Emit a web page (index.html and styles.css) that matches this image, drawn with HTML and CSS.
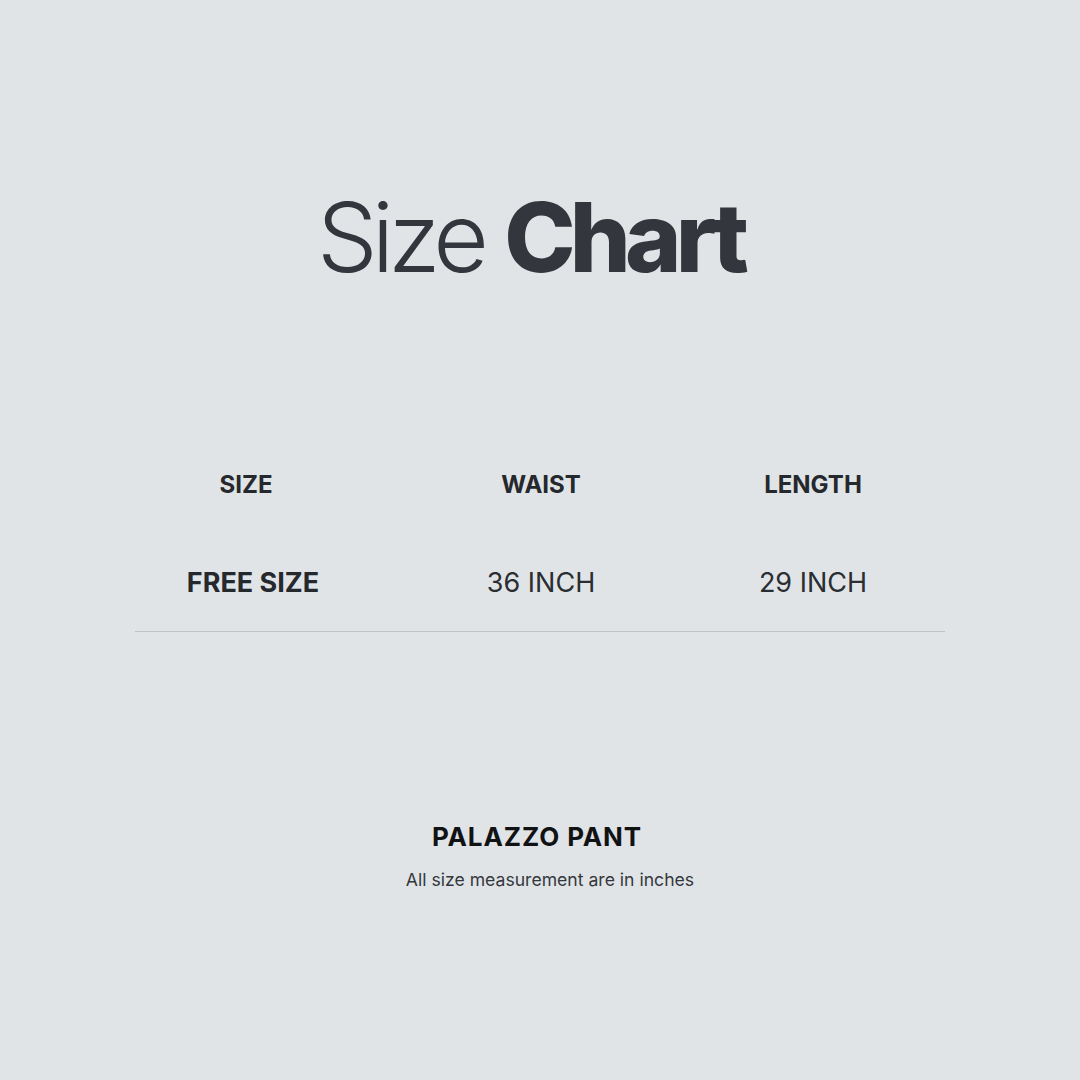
FILE: index.html
```html
<!DOCTYPE html>
<html>
<head>
<meta charset="utf-8">
<link rel="stylesheet" href="styles.css">
</head>
<body>
<main class="page">
  <h1 class="title"><span class="light">Size</span> <span class="heavy">Chart</span></h1>
  <section class="table">
    <div class="row head">
      <div class="cell c1">SIZE</div>
      <div class="cell c2">WAIST</div>
      <div class="cell c3">LENGTH</div>
    </div>
    <div class="row body-row">
      <div class="cell c1 strong">FREE SIZE</div>
      <div class="cell c2">36 INCH</div>
      <div class="cell c3">29 INCH</div>
    </div>
  </section>
  <footer class="foot">
    <div class="product">PALAZZO PANT</div>
    <div class="note">All size measurement are in inches</div>
  </footer>
</main>
</body>
</html>
```
FILE: styles.css
```css
html, body {
  margin: 0;
  padding: 0;
  background: #e0e4e7;
}
body {
  width: 1080px;
  height: 1080px;
  font-family: Inter, "Noto Sans", sans-serif;
  color: #2a2e33;
}
.page {
  display: flex;
  flex-direction: column;
  align-items: center;
  padding-top: 189px;
}
.title {
  margin: 0 20px 0 0;
  font-size: 96px;
  line-height: 1;
  color: #33373d;
  letter-spacing: -5.8px;
  font-weight: 300;
  white-space: nowrap;
}
.title .light { font-weight: 300; }
.title .heavy { font-weight: 800; }
.table {
  margin-top: 185px;
  width: 810px;
  border-bottom: 1px solid #bfc3c6;
}
.row {
  display: grid;
  grid-template-columns: 230px 352px 192px 1fr;
}
.cell {
  text-align: center;
  white-space: nowrap;
}
.head .cell {
  font-size: 24px;
  font-weight: 700;
  line-height: 30px;
  color: #25282c;
}
.head .c1 { transform: translateX(-4px); }
.body-row {
  margin-top: 66px;
  padding-bottom: 31px;
}
.body-row .cell {
  font-size: 27px;
  font-weight: 400;
  line-height: 34px;
  color: #2a2d31;
}
.body-row .strong {
  font-weight: 700;
  color: #25282c;
  transform: translateX(3px);
}
.foot {
  margin-top: 189px;
  display: flex;
  flex-direction: column;
  align-items: center;
}
.product {
  font-size: 26px;
  font-weight: 700;
  line-height: 32px;
  letter-spacing: 0.9px;
  color: #111214;
  transform: translateX(-3px);
}
.note {
  margin-top: 16px;
  font-size: 17.6px;
  line-height: 22px;
  color: #34383d;
  transform: translateX(10px);
}
```
